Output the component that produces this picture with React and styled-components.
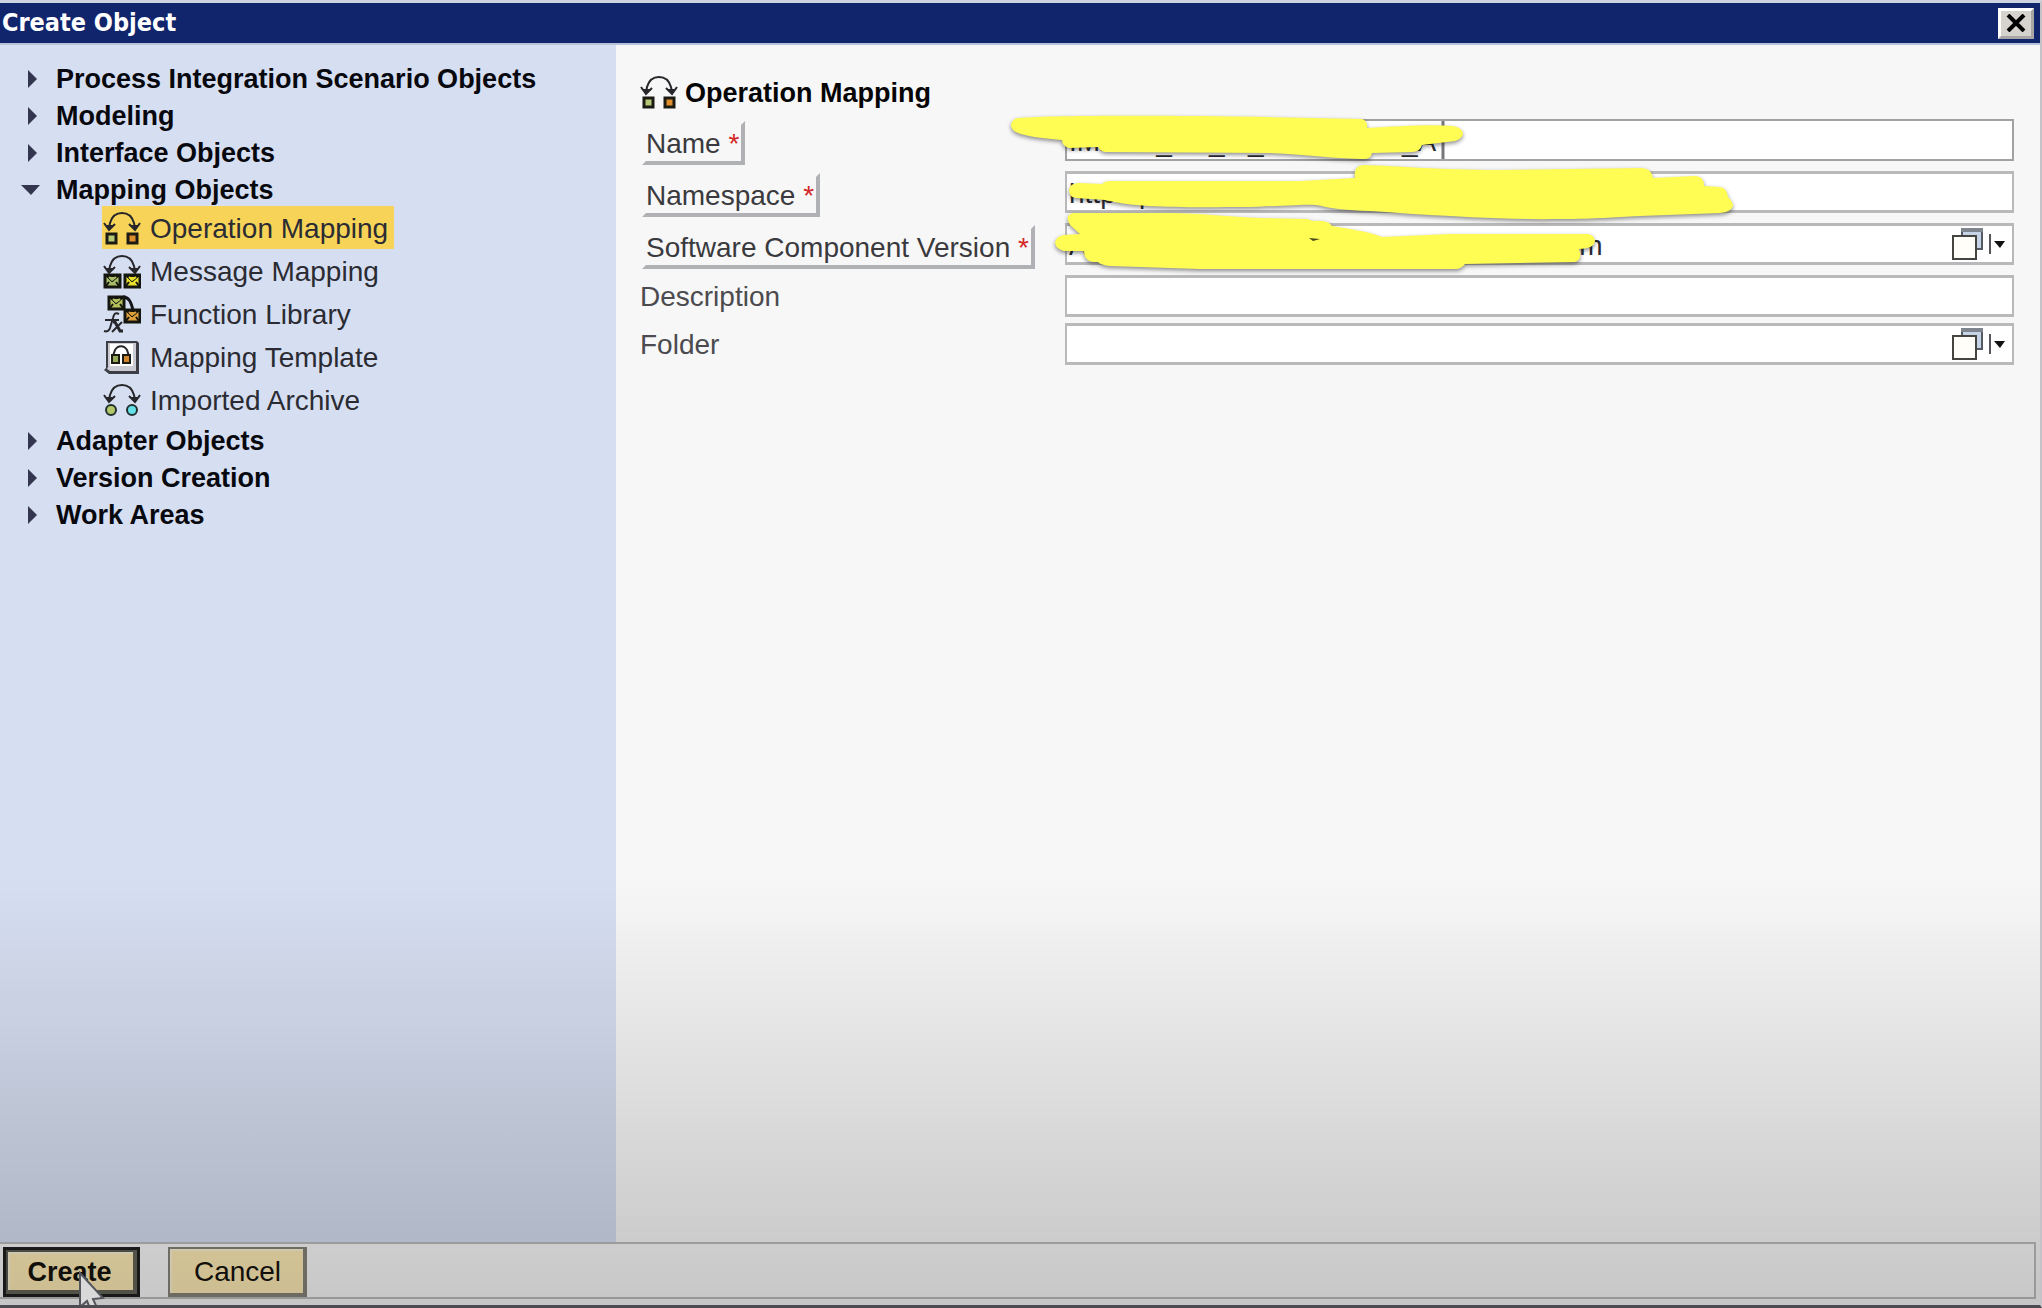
import React, { useState } from "react";
import styled, { createGlobalStyle } from "styled-components";

const GlobalStyle = createGlobalStyle`
  * {
    box-sizing: border-box;
  }
  body {
    margin: 0;
    font-family: "Liberation Sans", Arial, sans-serif;
    font-size: 28px;
    color: #2b2b33;
  }
  button, input {
    font: inherit;
    color: inherit;
  }
`;

const Dialog = styled.div`
  position: relative;
  display: flex;
  flex-direction: column;
  min-height: 100vh;
  overflow: hidden;
  background: #f7f7f7;
  border-top: 3px solid #cfd3df;
  border-right: 2px solid #c4c4c8;
  border-bottom: 3px solid #4c4c50;
`;
const TitleBar = styled.header`
  display: flex;
  align-items: center;
  justify-content: space-between;
  height: 42px;
  padding: 0 6px 0 2px;
  background: #11256d;
  border-bottom: 2px solid #b9c0da;
`;
const Title = styled.h1`
  margin: 0;
  font-family: "DejaVu Sans Condensed", "DejaVu Sans", sans-serif;
  font-size: 25px;
  font-weight: bold;
  line-height: 40px;
  color: #fff;
`;
const CloseBtn = styled.button`
  display: flex;
  align-items: center;
  justify-content: center;
  width: 36px;
  height: 31px;
  padding: 0;
  border: 3px solid;
  border-color: #fff #a9a7a5 #a9a7a5 #fff;
  background: #d6d2ce;
`;
const Body = styled.div`
  flex: 1;
  display: flex;
`;
const Sidebar = styled.nav`
  flex: 0 0 616px;
  padding: 16px 0 0 20px;
  background: #d6dff1;
`;
const Tree = styled.ul`
  margin: 0;
  padding: 0;
  list-style: none;
`;
const SubTree = styled.ul`
  margin: -3px 0 2px;
  padding: 0 0 0 82px;
  list-style: none;
`;
const GroupBtn = styled.button`
  display: flex;
  align-items: center;
  gap: 16px;
  height: 37px;
  padding: 0;
  border: none;
  background: none;
  font-size: 27px;
  font-weight: bold;
  color: #08080f;
`;
const ItemBtn = styled.button`
  display: flex;
  align-items: center;
  gap: 9px;
  height: 43px;
  padding: 0 6px 0 1px;
  border: none;
  background: ${({ $active }) => ($active ? "#f7d458" : "none")};
`;
const ItemText = styled.span`
  padding-top: 2px;
`;
const Panel = styled.main`
  flex: 1;
  padding: 29px 26px 0 24px;
`;
const Heading = styled.h2`
  display: flex;
  align-items: center;
  gap: 7px;
  height: 36px;
  margin: 0 0 9px;
  font-size: 27px;
  color: #050505;
`;
const Form = styled.form`
  position: relative;
`;
const FormRow = styled.div`
  display: grid;
  grid-template-columns: 425px 1fr;
  height: 46px;
  margin-bottom: ${({ $required }) => ($required ? "6px" : "2px")};
`;
const PlainLabel = styled.label`
  line-height: 44px;
  color: #4b4b4f;
`;
const RaisedLabel = styled.label`
  justify-self: start;
  height: 44px;
  margin: 2px 0 0 2px;
  padding: 2px 2px 0 0;
  border: 4px solid;
  border-color: transparent #b0b1b5 #b0b1b5 transparent;
  line-height: 34px;
  color: #3a3a3e;
`;
const Star = styled.span`
  color: #d32626;
`;
const FieldBox = styled.div`
  display: flex;
  align-items: center;
  height: 42px;
  padding-right: 6px;
  border: 2px solid ${({ $focused }) => ($focused ? "#a2a2a2" : "#b9b9bb")};
  border-top-width: ${({ $focused }) => ($focused ? "2px" : "3px")};
  border-bottom-width: ${({ $focused }) => ($focused ? "2px" : "3px")};
  background: #fff;
`;
const FieldInput = styled.input`
  flex: 1;
  min-width: 0;
  height: 36px;
  padding: 4px 2px 0;
  border: none;
  outline: none;
  background: none;
`;
const PickBtn = styled.button`
  display: flex;
  padding: 0;
  border: none;
  background: none;
`;
const Marker = styled.svg`
  position: absolute;
  left: 370px;
  top: -9px;
  overflow: visible;
  pointer-events: none;
`;
const MarkerStrokes = styled.g`
  fill: #fffc53;
  filter: drop-shadow(0 2px 2px rgba(0, 0, 0, 0.45));
`;
const Footer = styled.footer`
  display: flex;
  gap: 28px;
  margin: 0 4px 6px 0;
  padding: 3px 0 0 3px;
  border: 2px solid #bdbdbd;
  border-left: none;
  background: #f9f9f9;
`;
const FooterBtn = styled.button`
  min-width: ${({ $primary }) => ($primary ? "137px" : "139px")};
  height: 50px;
  padding: ${({ $primary }) => ($primary ? "0 4px 0 0" : "0")};
  border: ${({ $primary }) => ($primary ? "3px solid #1f1f1f" : "2px solid #86847a")};
  background: #ffecb6;
  box-shadow: ${({ $primary }) =>
    $primary
      ? "inset -4px -4px 0 #66655a, inset 2px 2px 0 #5a5a54, inset 4px 4px 0 #fbf3d4"
      : "inset -2px -2px 0 #86847a, inset 2px 2px 0 #fbf3d4"};
  font-size: ${({ $primary }) => ($primary ? "27px" : "28px")};
  font-weight: ${({ $primary }) => ($primary ? "bold" : "normal")};
  color: #15120c;
`;
const Pointer = styled.svg`
  position: absolute;
  left: 77px;
  bottom: -14px;
`;
const Shade = styled.div`
  position: absolute;
  inset: 0;
  background: linear-gradient(rgba(0, 0, 0, 0) 67%, rgba(0, 0, 0, 0.17) 94%, rgba(0, 0, 0, 0.2));
  pointer-events: none;
`;

const Arc = () => (
  <g fill="none" stroke="#26262b" strokeWidth="2">
    <path d="M6 18 L7 13 C9 6 13 3 19 3 S29 6 31 13 L32 18" />
    <path d="M1 13 L6 20 L12 14 M26 14 L32 20 L37 13" />
    <path d="M4 16 L8 16 L6 18 Z M30 16 L34 16 L32 18 Z" fill="#26262b" />
  </g>
);
const Envelope = ({ x, y, fill }) => (
  <g stroke="#14160f" strokeWidth="2">
    <rect x={x + 1} y={y + 1} width="15" height="12" fill={fill} strokeWidth="3" />
    <path d={`M${x + 2} ${y + 2} L${x + 8} ${y + 8} L${x + 15} ${y + 2} Z`} fill="#14160f" strokeWidth="1" />
    <path d={`M${x + 5} ${y + 3} L${x + 8} ${y + 6} L${x + 12} ${y + 3}`} fill={fill} stroke={fill} />
    <path d={`M${x + 2} ${y + 12} L${x + 5} ${y + 8} M${x + 15} ${y + 12} L${x + 12} ${y + 8}`} />
  </g>
);

const OperationIcon = () => (
  <svg width="38" height="36" aria-hidden="true">
    <Arc />
    <g stroke="#1b1b14" strokeWidth="3">
      <rect x="4" y="24" width="9" height="9" fill="#b5c873" />
      <rect x="25" y="24" width="9" height="9" fill="#dd8d2b" />
    </g>
  </svg>
);
const MessageIcon = () => (
  <svg width="38" height="36" aria-hidden="true">
    <Arc />
    <Envelope x={1} y={21} fill="#a9bd68" />
    <Envelope x={21} y={21} fill="#e9e02e" />
  </svg>
);
const FunctionIcon = () => (
  <svg width="38" height="40" aria-hidden="true">
    <path d="M20 3 C26 3 28 8 30 16" fill="none" stroke="#15151a" strokeWidth="3" />
    <Envelope x={5} y={2} fill="#b3c05c" />
    <Envelope x={21} y={15} fill="#dca13a" />
    <g fill="none" stroke="#26262b" strokeWidth="3">
      <path d="M16 20 C12 18 11 20 10 24 L7 34 C6 37 4 38 1 37 M2 26 H16" strokeWidth="2" />
      <path d="M10 28 L12 28 L17 37 L20 37" />
      <path d="M19 28 L9 38" strokeWidth="2" />
    </g>
  </svg>
);
const TemplateIcon = () => (
  <svg width="38" height="36" aria-hidden="true">
    <path d="M3 2 H34 L36 4 V35 H6 L1 31 L3 29 Z" fill="#3c3d45" />
    <path d="M5 4 H33 V32 H7 L4 30 L5 28 Z" fill="#c9cad2" />
    <path d="M7 5 H30 V27 H7 Z" fill="#fff" />
    <path d="M10 17 L12 11 C15 6 21 6 24 11 L26 17" fill="none" stroke="#26262b" strokeWidth="2" />
    <g stroke="#1b1b14" strokeWidth="2">
      <rect x="9" y="16" width="7" height="8" fill="#97a95b" />
      <rect x="20" y="16" width="7" height="8" fill="#d0842c" />
    </g>
  </svg>
);
const ArchiveIcon = () => (
  <svg width="38" height="36" aria-hidden="true">
    <Arc />
    <g stroke="#22302f" strokeWidth="2">
      <circle cx="8" cy="28" r="5" fill="#b3c86b" />
      <circle cx="29" cy="28" r="5" fill="#63e0e8" />
    </g>
  </svg>
);

const PickIcon = () => (
  <svg width="55" height="34" aria-hidden="true">
    <rect x="11" y="2" width="20" height="20" fill="#c6d4e8" stroke="#555a62" strokeWidth="2" />
    <rect x="10" y="1" width="22" height="4" fill="#7f858f" />
    <rect x="2" y="9" width="23" height="23" fill="#fffef9" stroke="#45453f" strokeWidth="2" />
    <path d="M39 7 V27" stroke="#55555a" strokeWidth="2" />
    <path d="M43 14 H54 L49 21 Z" fill="#111" />
  </svg>
);

const tree = [
  { name: "Process Integration Scenario Objects" },
  { name: "Modeling" },
  { name: "Interface Objects" },
  {
    name: "Mapping Objects",
    items: [
      { name: "Operation Mapping", Icon: OperationIcon },
      { name: "Message Mapping", Icon: MessageIcon },
      { name: "Function Library", Icon: FunctionIcon },
      { name: "Mapping Template", Icon: TemplateIcon },
      { name: "Imported Archive", Icon: ArchiveIcon },
    ],
  },
  { name: "Adapter Objects" },
  { name: "Version Creation" },
  { name: "Work Areas" },
];

const fields = [
  { id: "name", label: "Name", required: true, value: "IMXXX_XX_M_XXXXXXXI_A" },
  { id: "namespace", label: "Namespace", required: true, value: "http://p" },
  {
    id: "swcv",
    label: "Software Component Version",
    required: true,
    picker: true,
    value: "Axxxxxxxxxxxxxxxxxxxxxm of xxxxxxx.com",
  },
  { id: "description", label: "Description", value: "" },
  { id: "folder", label: "Folder", picker: true, value: "" },
];

const App = () => {
  const [open, setOpen] = useState("Mapping Objects");
  const [selected, setSelected] = useState("Operation Mapping");

  return (
    <>
      <GlobalStyle />
      <Dialog role="dialog" aria-label="Create Object">
        <TitleBar>
          <Title>Create Object</Title>
          <CloseBtn aria-label="Close">
            <svg width="20" height="18" aria-hidden="true">
              <path d="M2 1 L18 17 M18 1 L2 17" stroke="#000" strokeWidth="4" />
            </svg>
          </CloseBtn>
        </TitleBar>
        <Body>
          <Sidebar>
            <Tree>
              {tree.map((group) => (
                <li key={group.name}>
                  <GroupBtn
                    aria-expanded={open === group.name}
                    onClick={() => setOpen(open === group.name ? "" : group.name)}
                  >
                    <svg width="20" height="20" aria-hidden="true">
                      <path d={open === group.name ? "M1 4 H20 L11 14 Z" : "M8 0 L17 9 L8 18 Z"} fill="#34354f" />
                    </svg>
                    {group.name}
                  </GroupBtn>
                  {open === group.name && group.items && (
                    <SubTree>
                      {group.items.map(({ name, Icon }) => (
                        <li key={name}>
                          <ItemBtn $active={selected === name} onClick={() => setSelected(name)}>
                            <Icon />
                            <ItemText>{name}</ItemText>
                          </ItemBtn>
                        </li>
                      ))}
                    </SubTree>
                  )}
                </li>
              ))}
            </Tree>
          </Sidebar>
          <Panel>
            <Heading>
              <OperationIcon />
              <ItemText>Operation Mapping</ItemText>
            </Heading>
            <Form onSubmit={(e) => e.preventDefault()}>
              {fields.map((field) => (
                <FormRow key={field.id} $required={field.required}>
                  {field.required ? (
                    <RaisedLabel htmlFor={field.id}>
                      {field.label} <Star>*</Star>
                    </RaisedLabel>
                  ) : (
                    <PlainLabel htmlFor={field.id}>{field.label}</PlainLabel>
                  )}
                  <FieldBox $focused={field.id === "name"}>
                    <FieldInput id={field.id} type="text" defaultValue={field.value} />
                    {field.picker && (
                      <PickBtn type="button" aria-label={`Select ${field.label}`}>
                        <PickIcon />
                      </PickBtn>
                    )}
                  </FieldBox>
                </FormRow>
              ))}
              <Marker width="740" height="170" viewBox="1010 110 740 170" aria-hidden="true">
                <path d="M1443 121 V159" stroke="#77777a" strokeWidth="3" />
                <MarkerStrokes>
                  <path d="M1011 125 Q1012 119 1018 118 C1060 115 1200 115 1362 119 Q1368 121 1367 128 C1400 126 1430 124 1453 126 Q1463 128 1463 134 Q1462 139 1455 141 L1422 145 Q1420 152 1412 152 L1372 153 Q1371 159 1364 159 C1340 159 1310 155 1270 153 L1106 152 Q1101 152 1098 147 L1069 148 Q1062 146 1062 140 C1040 138 1025 136 1018 133 Q1011 130 1011 125 Z" />
                  <path d="M1069 190 Q1070 183 1079 183 L1102 184 Q1105 181 1109 181 H1300 L1355 178 Q1353 166 1363 165 C1400 166 1440 170 1500 170 L1642 168 Q1652 169 1653 178 L1695 176 Q1704 176 1704 186 L1720 187 Q1727 188 1728 197 Q1733 202 1733 206 Q1731 212 1720 213 L1640 216 C1610 217 1600 219 1560 219 C1500 220 1430 215 1370 211 Q1335 210 1322 206 C1310 203 1290 206 1250 207 C1200 207 1140 209 1105 200 L1076 198 Q1069 197 1069 190 Z" />
                  <path d="M1055 243 Q1056 236 1064 235 L1080 234 L1070 225 Q1064 215 1073 213 H1170 C1200 213 1230 217 1260 218 L1306 219 Q1310 219 1312 221 Q1329 220 1332 226 C1350 229 1370 232 1382 237 L1450 234 H1588 Q1595 235 1595 242 Q1593 249 1579 249 Q1583 260 1575 262 L1465 264 Q1461 269 1456 269 H1200 L1110 266 Q1101 265 1098 262 Q1084 263 1084 251 L1064 251 Q1056 249 1055 243 Z" />
                </MarkerStrokes>
                <path d="M1309 238 L1320 239 L1313 241 Z" fill="#4b4a1c" />
              </Marker>
            </Form>
          </Panel>
        </Body>
        <Footer>
          <FooterBtn $primary>Create</FooterBtn>
          <FooterBtn>Cancel</FooterBtn>
        </Footer>
        <Shade />
        <Pointer width="28" height="48" aria-hidden="true">
          <path d="M3 2 L3 36 L10 30 L16 44 L22 41 L16 28 L26 27 Z" fill="#d9d9da" stroke="#55555c" strokeWidth="2" />
        </Pointer>
      </Dialog>
    </>
  );
};

export default App;
